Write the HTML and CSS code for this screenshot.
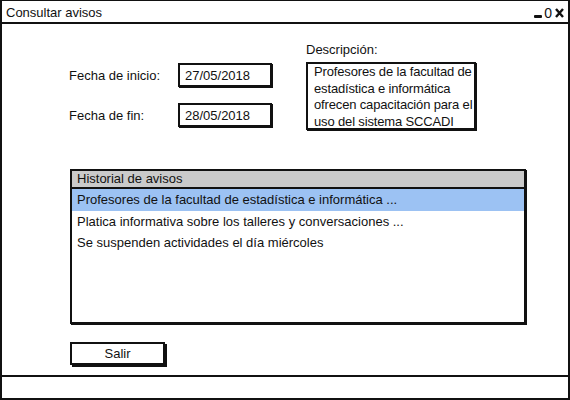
FILE: index.html
```html
<!DOCTYPE html>
<html lang="es">
<head>
<meta charset="utf-8">
<title>Consultar avisos</title>
<link rel="stylesheet" href="styles.css">
</head>
<body>
<div class="window">
  <div class="titlebar">
    <span class="title">Consultar avisos</span>
    <span class="controls">
      <span class="ctl-min"></span>
      <span class="ctl-max">0</span>
      <svg class="ctl-close" width="9" height="10" viewBox="0 0 9 10"><path d="M1 1 L8 9 M8 1 L1 9" stroke="#111" stroke-width="2.4" fill="none"/></svg>
    </span>
  </div>
  <div class="main">
    <div class="top">
      <div class="form">
        <div class="row">
          <span class="label">Fecha de inicio:</span>
          <div class="input">27/05/2018</div>
        </div>
        <div class="row">
          <span class="label">Fecha de fin:</span>
          <div class="input">28/05/2018</div>
        </div>
      </div>
      <div class="desc">
        <div class="desc-label">Descripción:</div>
        <div class="textarea">Profesores de la facultad de<br>estadística e informática<br>ofrecen capacitación para el<br>uso del sistema SCCADI</div>
      </div>
    </div>
    <div class="list">
      <div class="list-head">Historial de avisos</div>
      <div class="list-item selected">Profesores de la facultad de estadística e informática ...</div>
      <div class="list-item">Platica informativa sobre los talleres y conversaciones ...</div>
      <div class="list-item">Se suspenden actividades el día miércoles</div>
    </div>
    <div class="button">Salir</div>
  </div>
  <div class="statusbar"></div>
</div>
</body>
</html>
```

FILE: styles.css
```css
html, body {
  margin: 0;
  padding: 0;
  background: #fff;
}
body {
  font-family: "Liberation Sans", Arial, sans-serif;
  font-size: 13px;
  color: #111;
}
.window {
  width: 570px;
  height: 400px;
  box-sizing: border-box;
  border: 2px solid #111;
  border-top-width: 1px;
  display: flex;
  flex-direction: column;
}
.titlebar {
  height: 21px;
  border-bottom: 2px solid #111;
  display: flex;
  align-items: center;
  justify-content: space-between;
  padding: 0 4px 0 4px;
}
.title {
  font-size: 13px;
  padding-top: 1px;
}
.controls {
  display: flex;
  align-items: center;
  gap: 2px;
  padding-top: 2px;
}
.ctl-min {
  display: inline-block;
  width: 8px;
  height: 3px;
  background: #111;
  border-radius: 1px;
  margin-top: 8px;
}
.ctl-max {
  font-size: 14px;
  line-height: 14px;
  margin-right: 1px;
}
.ctl-close {
  display: block;
}
.main {
  flex: 1;
  padding-left: 67px;
}
.top {
  height: 145px;
  display: flex;
}
.form {
  width: 205px;
  padding-top: 39px;
  display: flex;
  flex-direction: column;
  gap: 16px;
}
.row {
  display: flex;
  align-items: center;
  height: 24px;
}
.label {
  width: 109px;
}
.input {
  width: 94px;
  height: 24px;
  box-sizing: border-box;
  border: 2px solid #111;
  box-shadow: 1px 1px 0 #111;
  padding: 2px 5px 0;
  line-height: 17px;
}
.desc {
  margin-left: 32px;
  padding-top: 17px;
}
.desc-label {
  line-height: 17px;
  margin-bottom: 4px;
}
.textarea {
  width: 170px;
  height: 68px;
  box-sizing: border-box;
  border: 2px solid #111;
  box-shadow: 1px 1px 0 #111;
  padding: 0 0 0 6px;
  line-height: 16.5px;
  letter-spacing: -0.15px;
  white-space: nowrap;
}
.list {
  margin-left: 1px;
  width: 456px;
  height: 155px;
  box-sizing: border-box;
  border: 2px solid #111;
  box-shadow: 1px 1px 0 #111;
}
.list-head {
  height: 16px;
  line-height: 16px;
  background: #cacaca;
  border-bottom: 2px solid #111;
  padding-left: 5px;
}
.list-item {
  height: 21px;
  line-height: 21px;
  padding-left: 5px;
  white-space: nowrap;
}
.list-item.selected {
  height: 22px;
  line-height: 22px;
  background: #9cc2f3;
}
.button {
  margin: 18px 0 0 1px;
  width: 95px;
  height: 23px;
  box-sizing: border-box;
  border: 2px solid #111;
  box-shadow: 2px 2px 0 #111;
  text-align: center;
  line-height: 19px;
}
.statusbar {
  height: 21px;
  border-top: 2px solid #111;
}
```
